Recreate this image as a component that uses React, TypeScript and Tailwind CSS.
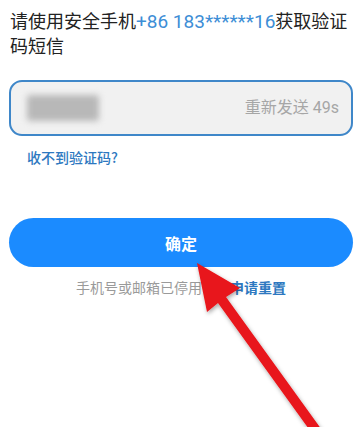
export default function App() {
  return (
    <div
      className="relative h-[427px] w-[362px] overflow-hidden bg-white"
      style={{ fontFamily: '"Noto Sans CJK SC", "Noto Sans", sans-serif' }}
    >
      <div className="px-[9px] pt-[9px]">
        <h1
          className="-mr-[9px] pl-[1px] text-[18px] leading-[25px] text-[#222]"
          style={{ fontFamily: 'Roboto, "Noto Sans CJK SC", sans-serif' }}
        >
          请使用安全手机<span className="text-[19px] text-[#3d8ed6]">+86 183******16</span>获取验证码短信
        </h1>

        {/* Code input */}
        <div className="mt-[21px] flex h-[56px] items-center justify-between rounded-[13px] border-2 border-[#3f87c9] bg-[#f1f1f1] pl-[16px] pr-[12px]">
          <div className="h-[26px] w-[72px] rounded-[3px] bg-[#b8b8b8] blur-[3px]" />
          <span
            className="text-[16px] text-[#a6a6a6]"
            style={{ fontFamily: 'Roboto, "Noto Sans CJK SC", sans-serif' }}
          >
            重新发送 49s
          </span>
        </div>

        <div className="mt-[11px] pl-[18px] text-[14px] font-medium text-[#2d78c0]">收不到验证码?</div>

        <button className="mt-[50px] flex h-[49px] w-full items-center justify-center rounded-full bg-[#1b8bff] text-[16px] font-bold text-white">
          确定
        </button>

        <p className="mt-[10px] text-center text-[14px] text-[#9a9a9a]">
          手机号或邮箱已停用？<span className="font-bold text-[#2d78c0]">去申请重置</span>
        </p>
      </div>

      {/* Annotation arrow */}
      <svg className="pointer-events-none absolute left-0 top-0" width="362" height="427" viewBox="0 0 362 427">
        <defs>
          <filter id="sh" x="-20%" y="-20%" width="140%" height="140%">
            <feDropShadow dx="1" dy="2" stdDeviation="2" floodColor="#000" floodOpacity="0.35" />
          </filter>
        </defs>
        <g filter="url(#sh)" fill="#e8141a">
          <polygon points="197,263 240,288 226,297 332,444 324,450 218,303 207,312" />
        </g>
      </svg>
    </div>
  );
}
